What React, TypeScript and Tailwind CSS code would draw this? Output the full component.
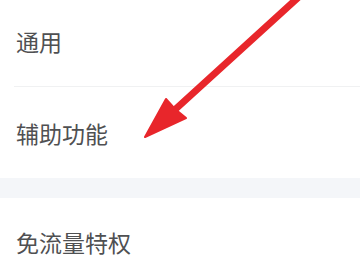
const items = ["通用", "辅助功能"];

export default function App() {
  return (
    <div className="relative w-[360px] h-[270px] overflow-hidden bg-white font-['Noto_Sans_CJK_SC','Noto_Sans',sans-serif] text-[#4f5052]">
      <div className="flex flex-col">
        <div className="h-[86px] flex items-center pl-4 pb-[4px] text-[23px]">{items[0]}</div>
        <div className="ml-[14px] h-px bg-[#f0f1f2]" />
        <div className="h-[91px] flex items-center pl-4 pt-[2px] text-[23px]">{items[1]}</div>
        <div className="h-[20px] bg-[#f4f6f9]" />
        <div className="h-[72px] flex items-center pl-4 pt-[16px] text-[23px]">免流量特权</div>
      </div>
      <svg className="absolute left-0 top-0" width="360" height="270" viewBox="0 0 360 270">
        <line x1="302" y1="-6" x2="168" y2="116" stroke="#e8262b" strokeWidth="7" strokeLinecap="round" />
        <polygon points="145,137 166,99 175,109 186,118" fill="#e8262b" stroke="#e8262b" strokeWidth="2" strokeLinejoin="round" />
      </svg>
    </div>
  );
}
